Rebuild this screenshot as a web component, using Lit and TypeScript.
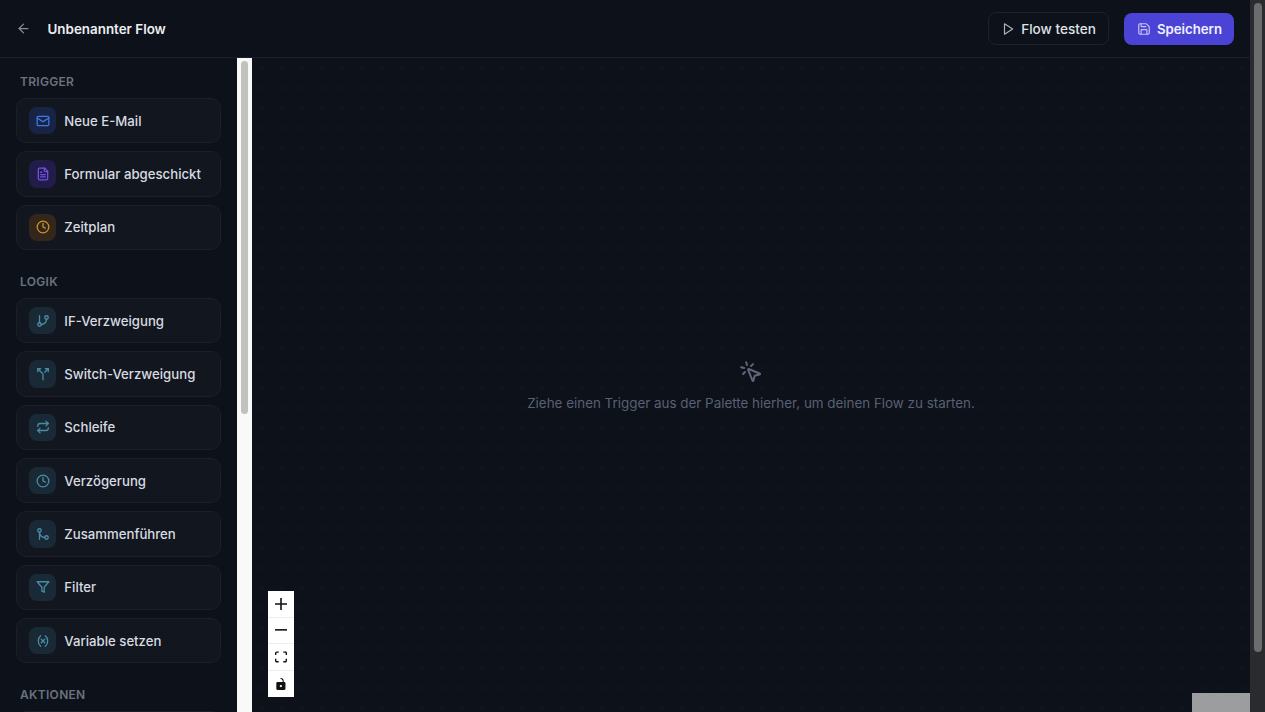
import { LitElement, html, css, svg, TemplateResult } from "lit";
import { customElement } from "lit/decorators.js";

const I: Record<string, TemplateResult> = {
  mail: svg`<rect x="2" y="4" width="20" height="16" rx="2"/><path d="m22 7-8.97 5.7a1.94 1.94 0 0 1-2.06 0L2 7"/>`,
  file: svg`<path d="M15 2H6a2 2 0 0 0-2 2v16a2 2 0 0 0 2 2h12a2 2 0 0 0 2-2V7Z"/><path d="M14 2v4a2 2 0 0 0 2 2h4"/><path d="M10 9H8"/><path d="M16 13H8"/><path d="M16 17H8"/>`,
  clock: svg`<circle cx="12" cy="12" r="10"/><polyline points="12 6 12 12 16 14"/>`,
  branch: svg`<line x1="6" x2="6" y1="3" y2="15"/><circle cx="18" cy="6" r="3"/><circle cx="6" cy="18" r="3"/><path d="M18 9a9 9 0 0 1-9 9"/>`,
  split: svg`<path d="M16 3h5v5"/><path d="M8 3H3v5"/><path d="M12 22v-8.3a4 4 0 0 0-1.172-2.872L3 3"/><path d="m15 9 6-6"/>`,
  repeat: svg`<path d="m17 2 4 4-4 4"/><path d="M3 11v-1a4 4 0 0 1 4-4h14"/><path d="m7 22-4-4 4-4"/><path d="M21 13v1a4 4 0 0 1-4 4H3"/>`,
  merge: svg`<circle cx="18" cy="18" r="3"/><circle cx="6" cy="6" r="3"/><path d="M6 21V9a9 9 0 0 0 9 9"/>`,
  filter: svg`<polygon points="22 3 2 3 10 12.46 10 19 14 21 14 12.46 22 3"/>`,
  variable: svg`<path d="M8 21s-4-3-4-9 4-9 4-9"/><path d="M16 3s4 3 4 9-4 9-4 9"/><line x1="15" x2="9" y1="9" y2="15"/><line x1="9" x2="15" y1="9" y2="15"/>`,
  arrow: svg`<path d="m12 19-7-7 7-7"/><path d="M19 12H5"/>`,
  play: svg`<polygon points="6 3 20 12 6 21 6 3"/>`,
  save: svg`<path d="M15.2 3a2 2 0 0 1 1.4.6l3.8 3.8a2 2 0 0 1 .6 1.4V19a2 2 0 0 1-2 2H5a2 2 0 0 1-2-2V5a2 2 0 0 1 2-2z"/><path d="M17 21v-7a1 1 0 0 0-1-1H8a1 1 0 0 0-1 1v7"/><path d="M7 3v4a1 1 0 0 0 1 1h7"/>`,
  pointer: svg`<path d="M14 4.1 12 6"/><path d="m5.1 8-2.9-.8"/><path d="m6 12-1.9 2"/><path d="M7.2 2.2 8 5.1"/><path d="M9.037 9.69a.498.498 0 0 1 .653-.653l11 4.5a.5.5 0 0 1-.074.949l-4.349 1.041a1 1 0 0 0-.74.739l-1.04 4.35a.5.5 0 0 1-.95.074z"/>`,
};

const icon = (n: string, cls = "") =>
  html`<svg class=${cls} viewBox="0 0 24 24" fill="none" stroke="currentColor" stroke-width="2" stroke-linecap="round" stroke-linejoin="round">${I[n]}</svg>`;

type Item = [string, string, string];
const sections: [string, Item[]][] = [
  ["TRIGGER", [["Neue E-Mail", "mail", "blue"], ["Formular abgeschickt", "file", "violet"], ["Zeitplan", "clock", "amber"]]],
  ["LOGIK", [
    ["IF-Verzweigung", "branch", "teal"], ["Switch-Verzweigung", "split", "teal"], ["Schleife", "repeat", "teal"],
    ["Verzögerung", "clock", "teal"], ["Zusammenführen", "merge", "teal"], ["Filter", "filter", "teal"], ["Variable setzen", "variable", "teal"],
  ]],
  ["AKTIONEN", [["", "", ""]]],
];

@customElement("app-root")
export class AppRoot extends LitElement {
  static styles = css`
    :host { display: flex; width: 1265px; height: 712px; overflow: hidden; background: #0d1119; font-family: Inter, "Liberation Sans", sans-serif; color: #e5e7eb; }
    svg { display: block; }
    .main { flex: 1; min-width: 0; display: flex; flex-direction: column; }
    .page-bar { width: 15px; background: #2a2b2e; padding: 3px 3px 0 4px; box-sizing: border-box; flex: none; }
    .page-bar div { height: 649px; background: #6b6c6e; border-radius: 4px; }
    header { height: 58px; flex: none; box-sizing: border-box; border-bottom: 1px solid #1b1f2a; display: flex; align-items: center; padding: 0 16px; }
    .back { width: 15px; height: 15px; color: #858b9a; margin-right: 16px; }
    .title { font-size: 13.4px; font-weight: 600; color: #eceef2; flex: 1; padding-left: 0.5px; }
    .btn { display: flex; align-items: center; box-sizing: border-box; font-weight: 500; border-radius: 8px; white-space: nowrap; }
    .btn svg { width: 14px; height: 14px; margin-right: 6px; }
    .ghost { height: 33px; padding: 0 12px; border: 1px solid #1e222d; color: #dfe2e8; margin-right: 15px; font-size: 13.6px; }
    .ghost svg { color: #aeb3bd; }
    .primary { height: 32px; padding: 0 12px 0 13px; background: #4a43d6; color: #f1f1fd; font-weight: 600; font-size: 13.2px; }
    .primary svg { color: #c7c4f6; }
    .body { flex: 1; min-height: 0; display: flex; }
    aside { width: 237px; flex: none; box-sizing: border-box; padding: 16px 16px 0; overflow: hidden; }
    .label { font-size: 12px; line-height: 16px; font-weight: 600; letter-spacing: 0.3px; color: #6b7280; margin-bottom: 8px; padding-left: 4px; }
    .section { margin-bottom: 24px; }
    .item { display: flex; align-items: center; height: 45.33px; box-sizing: border-box; margin-bottom: 8px; padding: 0 12px; border: 1px solid #1b1f2a; border-radius: 10px; background: #12161f; font-size: 13.2px; font-weight: 500; color: #d8dbe1; white-space: nowrap; }
    .section .item:last-child { margin-bottom: 0; }
    .ico { width: 27.33px; height: 27.33px; border-radius: 8px; flex: none; display: flex; align-items: center; justify-content: center; margin-right: 8px; }
    .ico svg { width: 14px; height: 14px; stroke-width: 2.2; }
    .blue { background: #182445; color: #3f78e0; }
    .violet { background: #221c4a; color: #7352e0; }
    .amber { background: #32271a; color: #d0902a; }
    .teal { background: #1a2936; color: #4a8ca6; }
    .side-bar { width: 15px; flex: none; background: #f9f9f9; box-sizing: border-box; padding: 3px 4px 0; }
    .side-bar div { height: 353px; background: #c1c1bd; border-radius: 4px; }
    .canvas { flex: 1; min-width: 0; position: relative; display: flex; flex-direction: column; align-items: center; justify-content: center; padding-top: 2.5px; box-sizing: border-box;
      background-image: radial-gradient(circle, #161a24 0.7px, transparent 1px); background-size: 20px 20px; }
    .hint-ico { width: 24px; height: 24px; color: #5f6678; margin-bottom: 9.5px; }
    .hint { font-size: 13.4px; line-height: 20px; color: #596073; white-space: nowrap; }
    .controls { position: absolute; left: 16px; bottom: 15px; width: 25.5px; background: #fff; display: flex; flex-direction: column; }
    .controls div { height: 26.5px; display: flex; align-items: center; justify-content: center; box-sizing: border-box; border-bottom: 1px solid #eee; }
    .controls div:last-child { border-bottom: 0; }
    .controls svg { width: 12px; height: 12px; fill: #111; }
    .mini { position: absolute; right: 0; bottom: 0; width: 58px; height: 19px; background: #9c9d9f; }
  `;

  render() {
    return html`
      <div class="main">
        <header>
          ${icon("arrow", "back")}
          <div class="title">Unbenannter Flow</div>
          <div class="btn ghost">${icon("play")}Flow testen</div>
          <div class="btn primary">${icon("save")}Speichern</div>
        </header>
        <div class="body">
          <aside>
            ${sections.map(([label, items]) => html`
              <div class="section">
                <div class="label">${label}</div>
                ${items.map(([t, ic, c]) => html`<div class="item">${ic ? html`<span class="ico ${c}">${icon(ic)}</span>` : ""}${t}</div>`)}
              </div>`)}
          </aside>
          <div class="side-bar"><div></div></div>
          <div class="canvas">
            ${icon("pointer", "hint-ico")}
            <div class="hint">Ziehe einen Trigger aus der Palette hierher, um deinen Flow zu starten.</div>
            <div class="controls">
              <div><svg viewBox="0 0 32 32"><path d="M32 18.133H18.133V32h-4.266V18.133H0v-4.266h13.867V0h4.266v13.867H32z"/></svg></div>
              <div><svg viewBox="0 0 32 5"><path d="M0 0h32v4.2H0z"/></svg></div>
              <div><svg viewBox="0 0 32 30"><path d="M3.692 4.63c0-.53.4-.938.939-.938h5.215V0H4.708C2.13 0 0 2.054 0 4.63v5.216h3.692V4.631zM27.354 0h-5.2v3.692h5.17c.53 0 .984.4.984.939v5.215H32V4.631A4.624 4.624 0 0027.354 0zm.954 24.83c0 .532-.4.94-.939.94h-5.215v3.768h5.215c2.577 0 4.631-2.13 4.631-4.707v-5.139h-3.692v5.139zm-23.677.94c-.531 0-.939-.4-.939-.94v-5.138H0v5.139c0 2.577 2.13 4.707 4.708 4.707h5.138V25.77H4.631z"/></svg></div>
              <div><svg viewBox="0 0 25 32"><path d="M21.333 10.667H19.81V7.619C19.81 3.429 16.38 0 12.19 0c-4.114 1.828-1.37 2.133.305 2.438 1.676.305 4.42 2.59 4.42 5.181v3.048H3.047A3.056 3.056 0 000 13.714v15.238A3.056 3.056 0 003.048 32h18.285a3.056 3.056 0 003.048-3.048V13.714a3.056 3.056 0 00-3.048-3.047zM12.19 24.533a3.056 3.056 0 01-3.047-3.047 3.056 3.056 0 013.047-3.048 3.056 3.056 0 013.048 3.048 3.056 3.056 0 01-3.048 3.047z"/></svg></div>
            </div>
            <div class="mini"></div>
          </div>
        </div>
      </div>
      <div class="page-bar"><div></div></div>
    `;
  }
}
